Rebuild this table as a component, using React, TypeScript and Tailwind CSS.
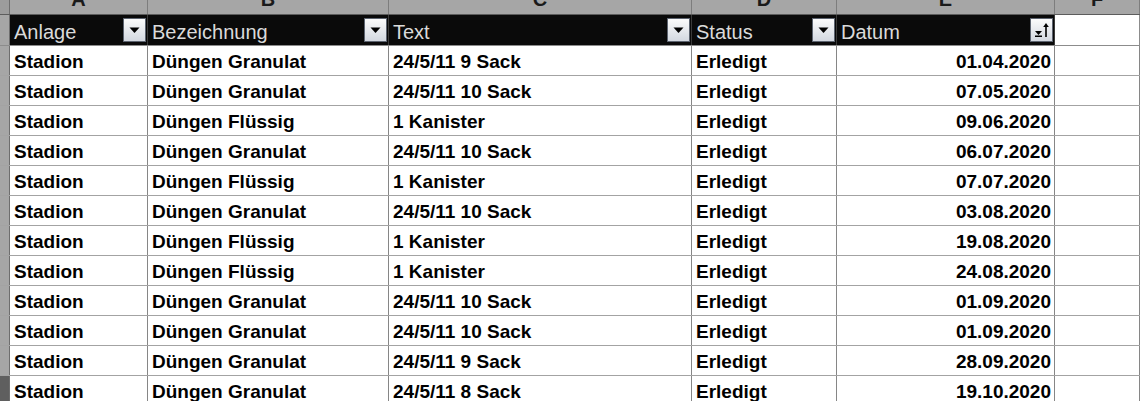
import React from "react";

const rows: [string, string, string, string, string][] = [
  ["Stadion", "Düngen Granulat", "24/5/11 9 Sack", "Erledigt", "01.04.2020"],
  ["Stadion", "Düngen Granulat", "24/5/11 10 Sack", "Erledigt", "07.05.2020"],
  ["Stadion", "Düngen Flüssig", "1 Kanister", "Erledigt", "09.06.2020"],
  ["Stadion", "Düngen Granulat", "24/5/11 10 Sack", "Erledigt", "06.07.2020"],
  ["Stadion", "Düngen Flüssig", "1 Kanister", "Erledigt", "07.07.2020"],
  ["Stadion", "Düngen Granulat", "24/5/11 10 Sack", "Erledigt", "03.08.2020"],
  ["Stadion", "Düngen Flüssig", "1 Kanister", "Erledigt", "19.08.2020"],
  ["Stadion", "Düngen Flüssig", "1 Kanister", "Erledigt", "24.08.2020"],
  ["Stadion", "Düngen Granulat", "24/5/11 10 Sack", "Erledigt", "01.09.2020"],
  ["Stadion", "Düngen Granulat", "24/5/11 10 Sack", "Erledigt", "01.09.2020"],
  ["Stadion", "Düngen Granulat", "24/5/11 9 Sack", "Erledigt", "28.09.2020"],
  ["Stadion", "Düngen Granulat", "24/5/11 8 Sack", "Erledigt", "19.10.2020"],
];

const GRID = "grid grid-cols-[10px_138px_241px_303px_145px_218px_85px]";

function FilterButton({ sort }: { sort?: boolean }) {
  return (
    <div className="ml-auto mr-[1px] flex h-[24px] w-[23px] shrink-0 items-center justify-center border border-[#5d6470] bg-linear-to-b from-[#fbfbfb] to-[#d3d8e0]">
      {sort ? (
        <svg width="19" height="20" viewBox="0 0 19 20">
          <path d="M3 11 L10 11 L6.5 15 Z" fill="#000" />
          <rect x="3" y="15.5" width="7" height="1.5" fill="#000" />
          <path d="M14 3 L16.8 7 L11.2 7 Z" fill="#000" />
          <rect x="13.2" y="6" width="1.6" height="11" fill="#000" />
        </svg>
      ) : (
        <svg width="11" height="7" viewBox="0 0 11 7">
          <path d="M0.5 0.5 L10.5 0.5 L5.5 6 Z" fill="#000" />
        </svg>
      )}
    </div>
  );
}

function HeaderCell({ label, sort }: { label: string; sort?: boolean }) {
  return (
    <div className="flex h-full items-center border-r border-[#3a3a3a] bg-[#0a0a0a] pl-[4px]">
      <span className="pt-[3px] text-[20px] leading-none text-[#dadada]">{label}</span>
      <FilterButton sort={sort} />
    </div>
  );
}

export default function App() {
  const letters = ["A", "B", "C", "D", "E", "F"];
  return (
    <div
      className="h-[401px] w-[1140px] overflow-hidden bg-white text-black"
      style={{ fontFamily: '"Liberation Sans", Arial, sans-serif' }}
    >
      {/* column letters */}
      <div className={`${GRID} h-[15px] border-b border-[#5c5c5c] bg-[#a6a6a6]`}>
        <div className="border-r border-[#6e6e6e] bg-[#9c9c9c]" />
        {letters.map((l) => (
          <div
            key={l}
            className="flex justify-center overflow-hidden border-r border-[#7d7d7d]"
          >
            <span className="mt-[-11px] text-[20px] font-bold leading-[20px] text-[#1a1a1a]">
              {l}
            </span>
          </div>
        ))}
      </div>

      {/* table header */}
      <div className={`${GRID} h-[31px] border-b border-[#8c8c8c]`}>
        <div className="border-r border-[#6e6e6e] bg-[#a6a6a6]" />
        <HeaderCell label="Anlage" />
        <HeaderCell label="Bezeichnung" />
        <HeaderCell label="Text" />
        <HeaderCell label="Status" />
        <HeaderCell label="Datum" sort />
        <div className="border-r border-[#8c8c8c] bg-white" />
      </div>

      {/* data rows */}
      {rows.map((r, i) => (
        <div key={i} className={`${GRID} h-[30px] border-b border-[#a3a3a3]`}>
          <div
            className={`border-r border-[#6e6e6e] ${
              i === rows.length - 1 ? "bg-[#5f5f5f]" : "bg-[#a6a6a6]"
            }`}
          />
          {r.map((c, j) => (
            <div
              key={j}
              className={`flex items-center border-r border-[#868686] text-[19px] font-bold leading-none ${
                j === 4 ? "justify-end pr-[3px]" : "pl-[4px]"
              }`}
            >
              <span className="pt-[2px]">{c}</span>
            </div>
          ))}
          <div className="border-r border-[#868686]" />
        </div>
      ))}
    </div>
  );
}
